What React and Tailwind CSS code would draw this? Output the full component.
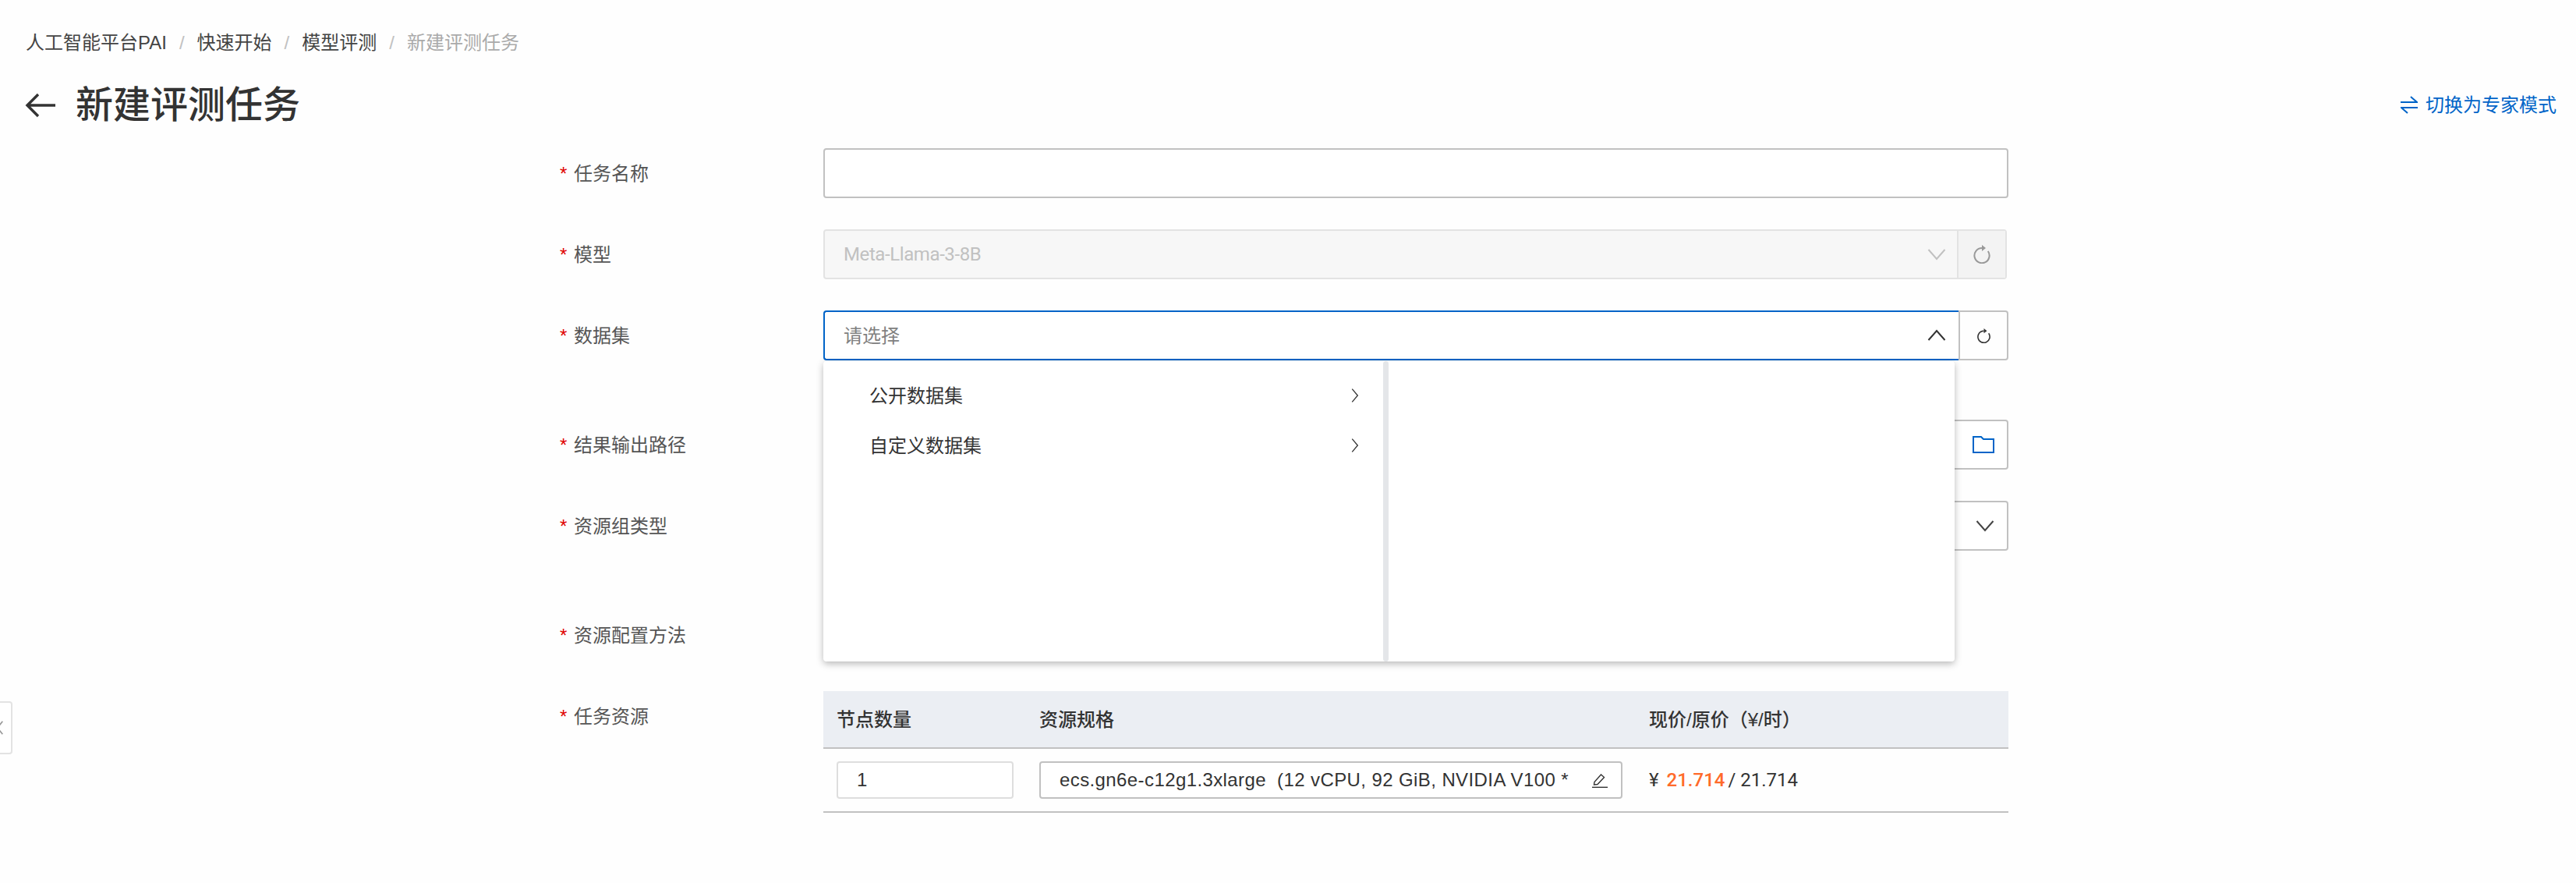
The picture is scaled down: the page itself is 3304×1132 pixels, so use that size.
import React from 'react';

const fontStack = '"Liberation Sans","Noto Sans CJK SC",sans-serif';

const Refresh = ({ className }) => (
  <svg viewBox="0 0 24 24" fill="none" stroke="currentColor" strokeWidth="2" className={className}>
    <path d="M19.8 8A9.6 9.6 0 1 1 12 4" />
    <path d="M12 0 17 4 12 8Z" fill="currentColor" stroke="none" />
  </svg>
);

const Chevron = ({ up, className }) => (
  <svg viewBox="0 0 24 24" fill="none" stroke="currentColor" strokeWidth="2" className={className}>
    <path d={up ? 'M1.5 18 12 6l10.5 12' : 'M1.5 6 12 18 22.5 6'} />
  </svg>
);

const Label = ({ children }) => (
  <div className="flex h-16 w-[338px] items-center pt-[2px] text-[24px] text-[#555]">
    <span className="w-[18px] text-[#e00000]">*</span>
    {children}
  </div>
);

const Row = ({ label, className, children }) => (
  <div className={`flex ${className}`}>
    <Label>{label}</Label>
    <div className="w-[1520px]">{children}</div>
  </div>
);

const Cascader = () => (
  <div className="absolute left-0 top-[65px] z-10 flex h-[385px] w-[1451px] rounded bg-white shadow-[0_3px_10px_rgba(0,0,0,0.28)]">
    <div className="w-[718px] pt-3 text-[24px] text-[#333]">
      {['公开数据集', '自定义数据集'].map((item) => (
        <div key={item} className="flex h-16 items-center justify-between pl-[59px] pr-[31px]">
          <span className="pt-[2px]">{item}</span>
          <svg viewBox="0 0 12 24" fill="none" stroke="#333" strokeWidth="1.6" className="h-[20px] w-[10px]">
            <path d="M1.5 2 10 12 1.5 22" />
          </svg>
        </div>
      ))}
    </div>
    <div className="h-full w-[7px] rounded bg-[#e4e6e9]" />
  </div>
);

export default function App() {
  return (
    <div className="h-[1132px] w-[3304px] overflow-hidden bg-[#fefefe] text-[#333]" style={{ fontFamily: fontStack }}>
      <div className="flex h-[110px] items-start gap-4 pl-[33px] pt-[37px] text-[24px] leading-9 text-[#444]">
        <span>人工智能平台PAI</span>
        <span className="text-[#c1c1c1]">/</span>
        <span>快速开始</span>
        <span className="text-[#c1c1c1]">/</span>
        <span>模型评测</span>
        <span className="text-[#c1c1c1]">/</span>
        <span className="text-[#aaa]">新建评测任务</span>
      </div>

      <div className="flex h-[50px] items-center justify-between pl-[32px] pr-[25px]">
        <div className="flex items-center gap-[25px]">
          <svg viewBox="0 0 40 32" fill="none" stroke="#333" strokeWidth="3.4" className="h-8 w-10">
            <path d="M39 16H3M17 2 3 16l14 14" />
          </svg>
          <h1 className="text-[48px] font-medium leading-none text-[#333]">新建评测任务</h1>
        </div>
        <div className="flex items-center gap-[10px] text-[24px] text-[#0064c8]">
          <svg viewBox="0 0 22 24" fill="none" stroke="currentColor" strokeWidth="2" className="h-6 w-[22px]">
            <path d="M0 8H21L13 1M22 15H1L9 22" />
          </svg>
          切换为专家模式
        </div>
      </div>

      <div className="pl-[718px] pt-[30px]">
        <Row label="任务名称">
          <div className="h-16 rounded border-2 border-[#c1c1c1] bg-white" />
        </Row>

        <Row label="模型" className="mt-10">
          <div className="flex h-16 w-[1518px] rounded border-2 border-[#e3e3e3] bg-[#f7f7f7] text-[24px] text-[#c1c1c1]">
            <div className="flex flex-1 items-center justify-between pl-6 pr-[14px]">
              <span className="font-['Roboto'] tracking-[-0.4px]">Meta-Llama-3-8B</span>
              <Chevron className="h-6 w-6" />
            </div>
            <div className="flex w-[62px] items-center justify-center border-l-2 border-[#e3e3e3] bg-[#f3f3f3] text-[#999]">
              <Refresh className="h-[24px] w-[24px]" />
            </div>
          </div>
        </Row>

        <Row label="数据集" className="mt-10">
          <div className="relative flex h-16">
            <div className="flex flex-1 items-center justify-between rounded-l border-2 border-r-0 border-[#0064c8] bg-white pl-6 pr-4 text-[24px] text-[#808080]">
              <span className="pt-[2px]">请选择</span>
              <Chevron up className="h-6 w-6 text-[#333]" />
            </div>
            <div className="flex w-[64px] items-center justify-center rounded-r border-2 border-[#c1c1c1] text-[#333]">
              <Refresh className="h-[19px] w-[19px]" />
            </div>
            <Cascader />
          </div>
        </Row>

        <Row label="结果输出路径" className="mt-[76px]">
          <div className="flex h-16 items-center justify-end rounded border-2 border-[#c1c1c1] bg-white pr-[16px] text-[#0064c8]">
            <svg viewBox="0 0 28 22" fill="none" stroke="currentColor" strokeWidth="2" className="h-[22px] w-7">
              <path d="M1 21V1h10l3 3h13v17Z" />
            </svg>
          </div>
        </Row>

        <Row label="资源组类型" className="mt-10">
          <div className="flex h-16 items-center justify-end rounded border-2 border-[#c1c1c1] bg-white pr-4 text-[#444]">
            <Chevron className="h-6 w-6" />
          </div>
        </Row>

        <Row label="资源配置方法" className="mt-[76px]" />

        <Row label="任务资源" className="mt-10">
          <div className="w-[1520px]">
            <div className="flex h-[74px] items-center border-b-2 border-[#c1c1c1] bg-[#ebeef3] text-[24px] font-medium text-[#333]">
              <span className="ml-[17px] w-[260px] pt-[2px]">节点数量</span>
              <span className="w-[782px] pt-[2px]">资源规格</span>
              <span className="pt-[2px]">现价/原价（¥/时）</span>
            </div>
            <div className="flex h-[82px] items-center border-b-2 border-[#c1c1c1] text-[24px] text-[#333]">
              <div className="ml-[17px] flex h-12 w-[227px] items-center rounded border-2 border-[#dedede] bg-white pl-6">1</div>
              <div className="ml-[33px] flex h-12 w-[748px] items-center justify-between rounded border-2 border-[#c1c1c1] bg-white pl-6 pr-[17px]">
                <span className="whitespace-pre tracking-[0.4px]">ecs.gn6e-c12g1.3xlarge  (12 vCPU, 92 GiB, NVIDIA V100 *</span>
                <svg viewBox="0 0 20 20" fill="none" stroke="#333" strokeWidth="1.4" className="h-5 w-5">
                  <path d="M2.5 16 3 12.5 11.5 3l4 3.5L7 15.5Z" />
                  <path d="M0 19.3h20" />
                </svg>
              </div>
              <div className="ml-[34px] font-['Roboto']">
                ¥ <span className="ml-1 font-medium text-[#ff6a2a]">21.714</span>
                <span className="-ml-[2px]"> / 21.714</span>
              </div>
            </div>
          </div>
        </Row>
      </div>

      {/* side collapse handle */}
      <div className="absolute left-0 top-[899px] flex h-[68px] w-[16px] items-center overflow-hidden rounded-r border-2 border-l-0 border-[#e3e3e3] bg-white">
        <svg viewBox="0 0 12 24" fill="none" stroke="#999" strokeWidth="2" className="-ml-[5px] h-5 w-[10px]">
          <path d="M10 2 2 12l8 10" />
        </svg>
      </div>
    </div>
  );
}
